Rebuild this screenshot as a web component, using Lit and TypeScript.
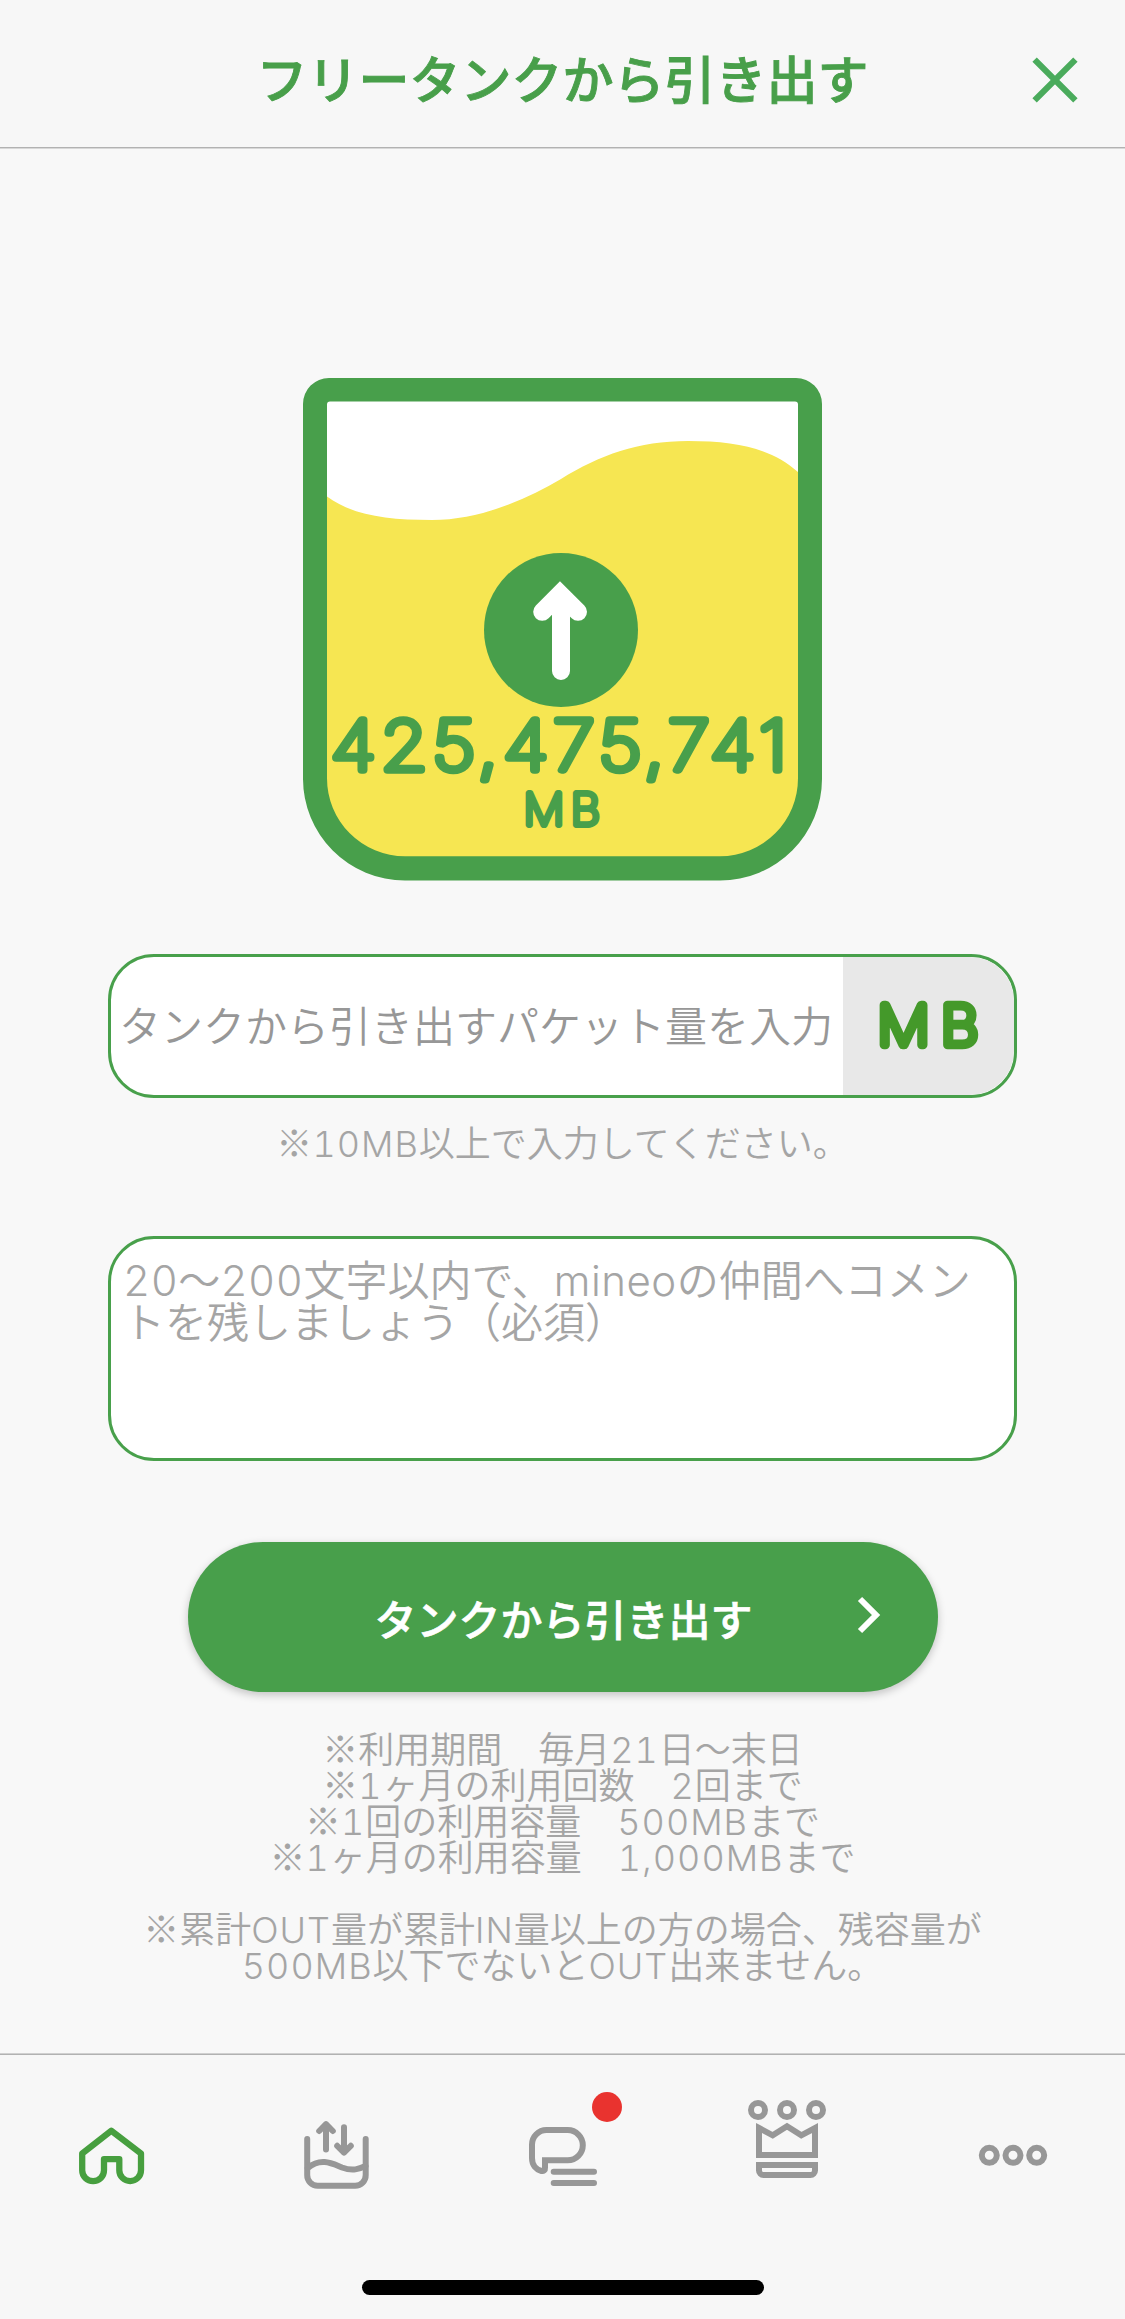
import { LitElement, html, svg, css } from "lit";
import { customElement } from "lit/decorators.js";

/** Wraps runs of Latin letters and digits so that they take the wider Latin face. */
const mixed = (text: string) =>
  text
    .split(/([0-9A-Za-z,]+)/)
    .filter((part) => part !== "")
    .map((part) => (/^[0-9A-Za-z,]+$/.test(part) ? html`<span class="latin">${part}</span>` : part));

const NOTES = [
  "※利用期間　毎月21日～末日",
  "※1ヶ月の利用回数　2回まで",
  "※1回の利用容量　500MBまで",
  "※1ヶ月の利用容量　1,000MBまで",
];

const TABS = [
  {
    name: "home",
    icon: svg`<path d="M111.3 75.8 L141 98.4 V115.2 a10.8 10.8 0 0 1 -21.7 0 V104.2 H104 V115.2 a10.9 10.9 0 0 1 -21.8 0 V98.4 Z"/>`,
  },
  {
    name: "tank",
    icon: svg`<path d="M82.2 84 V120 a10.5 10.5 0 0 0 10.5 10.7 H130.2 a10.5 10.5 0 0 0 10.5 -10.7 V84"/>
      <path d="M82.8 113 C96 102 108 109 117 112.5 C128 116.500 134 114 140.500 111"/>
      <path d="M101 69.200 V94.500 M94.200 76 L101 69.200 L107.800 76"/>
      <path d="M119 72.200 V97.500 M112.200 90.800 L119 97.500 L125.800 90.800"/>`,
  },
  {
    name: "talk",
    icon: svg`<path class="sharp" d="M95 105.300 H117.700 a15 15 0 0 0 0 -30.200 H96.500 a14.500 14.500 0 0 0 -14.500 14.500 V103 C82 110 86 114.500 91.500 116 a2.800 2.800 0 0 0 3.500 -3 Z"/>
      <path d="M103.700 116.700 H144 M103.700 128 H144"/>
      <circle class="badge" cx="157" cy="52" r="15"/>`,
  },
  {
    name: "crown",
    icon: svg`<circle cx="83" cy="55" r="7"/><circle cx="112" cy="55" r="7"/><circle cx="141" cy="55" r="7"/>
      <path class="sharp" d="M84 73 L97.700 80.300 L112 71.300 L126.300 80.300 L140 73 V100 H84 Z"/>
      <path class="sharp" d="M84 110 H140 V115.500 a4.500 4.500 0 0 1 -4.500 4.500 H88.500 a4.500 4.500 0 0 1 -4.500 -4.500 Z"/>`,
  },
  {
    name: "more",
    icon: svg`<circle cx="89.300" cy="100.300" r="7.500"/><circle cx="113" cy="100.300" r="7.500"/><circle cx="136.700" cy="100.300" r="7.500"/>`,
  },
];

@customElement("app-root")
export class AppRoot extends LitElement {
  static styles = css`
    :host {
      display: flex;
      flex-direction: column;
      width: 1125px;
      height: 2319px;
      overflow: hidden;
      background: #f8f8f8;
      color: #a5a5a5;
      font-family: "Noto Sans CJK JP", sans-serif;
      font-weight: 350;
    }
    * { box-sizing: border-box; }
    svg { display: block; }
    .latin {
      font-family: Inter, "Liberation Sans", sans-serif;
      font-weight: 350;
      font-variant-numeric: tabular-nums;
      letter-spacing: 0.028em;
      line-height: 0;
    }
    .comment .latin { letter-spacing: 0.012em; }
    .header {
      display: grid;
      grid-template-columns: 141px 1fr 141px;
      align-items: center;
      height: 148px;
      padding-top: 12px;
      background: #f7f7f7;
      border-bottom: 1px solid #b2b2b2;
      flex: none;
    }
    .title {
      grid-column: 2;
      margin: 0;
      padding-bottom: 5px;
      text-align: center;
      font-size: 51px;
      line-height: 60px;
      font-weight: 500;
      -webkit-text-stroke: 0.9px #489f4a;
      color: #489f4a;
    }
    .close { justify-self: center; }
    .main {
      flex: 1;
      display: flex;
      flex-direction: column;
      align-items: center;
      padding-top: 229px;
      border-top: 1px solid #d8d8d8;
      border-bottom: 1px solid #d0d0d0;
    }
    .tank { flex: none; }
    .rounded { font-family: Inter, sans-serif; font-weight: 100; stroke-linejoin: round; stroke-linecap: round; }
    .amount { letter-spacing: 4px; }
    .field {
      flex: none;
      display: flex;
      width: 909px;
      height: 144px;
      margin-top: 73px;
      border: 3px solid #48a04b;
      border-radius: 46px;
      background: #fff;
      overflow: hidden;
    }
    .field-text {
      flex: 1;
      display: flex;
      align-items: center;
      padding: 0 0 5px 8px;
      font-size: 42px;
      color: #979797;
      white-space: nowrap;
    }
    .unit { width: 171px; background: #e8e8e8; border-radius: 0 44px 44px 0; }
    .hint { margin: 25px 0 0; font-size: 36px; line-height: 36px; white-space: nowrap; }
    .comment {
      flex: none;
      width: 909px;
      height: 225px;
      margin-top: 77px;
      padding: 18px 12px;
      border: 3px solid #48a04b;
      border-radius: 46px;
      background: #fff;
      font-size: 42px;
      line-height: 42px;
      white-space: nowrap;
    }
    .submit {
      flex: none;
      display: grid;
      grid-template-columns: 1fr 378px 1fr;
      align-items: center;
      width: 750px;
      height: 150px;
      margin-top: 81px;
      border-radius: 75px;
      background: #489f4b;
      box-shadow: 0 3px 9px rgba(0, 0, 0, 0.22);
      color: #fff;
      font-size: 42px;
      font-weight: 500;
      -webkit-text-stroke: 0.7px #fff;
      white-space: nowrap;
    }
    .submit-label { grid-column: 2; padding-left: 1px; }
    .chevron { justify-self: end; margin: 0 54px 4px 0; }
    .notes { margin-top: 37px; font-size: 36px; line-height: 36px; text-align: center; white-space: nowrap; }
    .notes .warning { margin-top: 36px; }
    .tabs {
      flex: none;
      display: grid;
      grid-template-columns: repeat(5, 1fr);
      height: 265px;
      border-top: 1px solid #b2b2b2;
      background: #f7f7f7;
      grid-template-rows: 225px 15px;
    }
    .tab { fill: none; stroke: #979797; stroke-width: 6; stroke-linecap: round; stroke-linejoin: round; }
    .tab.active { stroke: #479f3f; stroke-width: 6.3; }
    .tab .sharp { stroke-linejoin: miter; }
    .tab .badge { fill: #e9332f; stroke: none; }
    .home-bar { grid-column: 1 / -1; justify-self: center; width: 402px; height: 15px; border-radius: 8px; background: #000; }
  `;

  render() {
    return html`
      <header class="header">
        <h1 class="title">フリータンクから引き出す</h1>
        <svg class="close" width="50" height="50" viewBox="0 0 50 50" fill="none" stroke="#4aab5c" stroke-width="6.200">
          <path d="M4.600 4.600 L45.400 45.400 M45.400 4.600 L4.600 45.400" />
        </svg>
      </header>
      <main class="main">
        <svg class="tank" width="519" height="503" viewBox="303 378 519 503">
          <path fill="#489f4b" d="M303 404 a26 26 0 0 1 26 -26 H796 a26 26 0 0 1 26 26 V778 a102 102 0 0 1 -102 102.500 H405 a102 102 0 0 1 -102 -102.500 Z" />
          <path fill="#fff" d="M327 404.500 a3 3 0 0 1 3 -3 H795 a3 3 0 0 1 3 3 V600 H327 Z" />
          <path fill="#f6e652" d="M327 496.500 C352 515 386 520 432 520 C480 520 525 500 561 479 C600 455 638 441 688 441 C738 441 772 449 798 472 V778 a78 78 0 0 1 -78 78.300 H405 a78 78 0 0 1 -78 -78.300 Z" />
          <circle cx="561" cy="630" r="77" fill="#489f4b" />
          <path d="M542.200 611.800 L560 594 L578 611.800 M561 600 V671" fill="none" stroke="#fff" stroke-width="18" stroke-linecap="round" />
          <text class="rounded amount" x="330.500" y="770" font-size="68" textLength="461" lengthAdjust="spacingAndGlyphs" fill="#489f4b" stroke="#489f4b" stroke-width="7.300">425,475,741</text>
          <text class="rounded" transform="translate(523.500 825) scale(1.060 1)" x="0 44.500" y="0" font-size="43" fill="#489f4b" stroke="#489f4b" stroke-width="5.800">MB</text>
        </svg>
        <div class="field">
          <div class="field-text">タンクから引き出すパケット量を入力</div>
          <svg class="unit" width="171" height="138" viewBox="0 0 171 138">
            <text class="rounded" transform="translate(34.500 88) scale(1.060 1)" x="0 60" y="0" font-size="55" fill="#44992a" stroke="#44992a" stroke-width="8.400">MB</text>
          </svg>
        </div>
        <p class="hint">${mixed("※10MB以上で入力してください。")}</p>
        <div class="comment">
          <div>${mixed("20～200文字以内で、mineoの仲間へコメン")}</div>
          <div>トを残しましょう（必須）</div>
        </div>
        <div class="submit">
          <span class="submit-label">タンクから引き出す</span>
          <svg class="chevron" width="28" height="40" viewBox="0 0 28 40" fill="none" stroke="#fff" stroke-width="6">
            <path d="M4 4 L20 20 L4 36" />
          </svg>
        </div>
        <div class="notes">
          ${NOTES.map((line) => html`<div>${mixed(line)}</div>`)}
          <div class="warning">${mixed("※累計OUT量が累計IN量以上の方の場合、残容量が")}</div>
          <div>${mixed("500MB以下でないとOUT出来ません。")}</div>
        </div>
      </main>
      <nav class="tabs">
        ${TABS.map(
          (tab) => html`<svg class="tab ${tab.name === "home" ? "active" : ""}" width="225" height="225" viewBox="0 0 225 225">${tab.icon}</svg>`,
        )}
        <div class="home-bar"></div>
      </nav>
    `;
  }
}
